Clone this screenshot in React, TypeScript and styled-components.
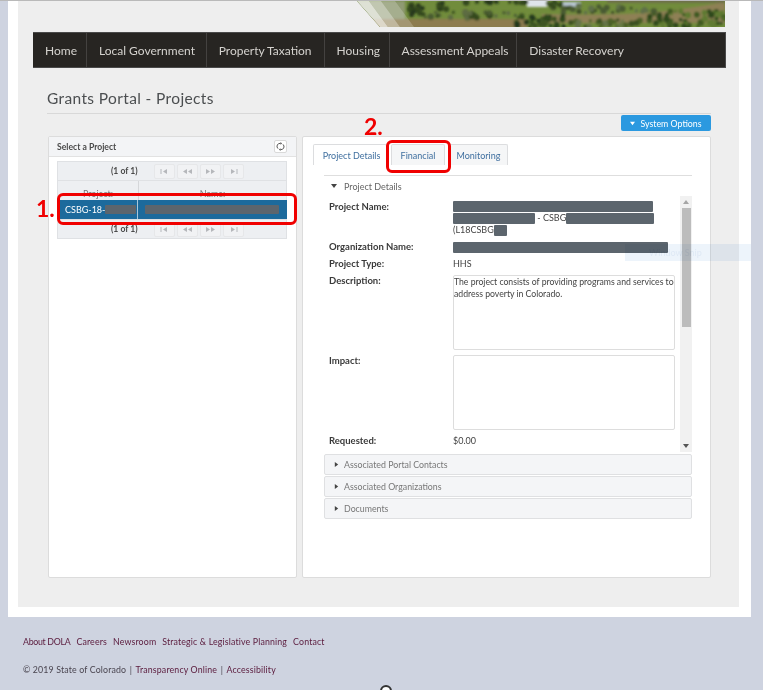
import React from 'react'
import styled, { createGlobalStyle } from 'styled-components'

const GlobalStyle = createGlobalStyle`
html, body { margin: 0; padding: 0; background: #ced3e0; }
* { box-sizing: border-box; }
`;

const panelFont = `Lato, "Open Sans", sans-serif`;

// page shell
const Root = styled.div`
position: relative;
width: 763px;
height: 690px;
overflow: hidden;
background: #ced3e0;
border-top: 1px solid #b9b9b9;
font-family: ${panelFont};
`;
const Sheet = styled.div`
width: 743px;
height: 616px;
margin-left: 8px;
padding: 0 12px 10px 10px;
background: #fff;
`;
const Inner = styled.div`
height: 606px;
background: #eeeeee;
padding: 0 13px 0 15px;
`;

// banner
const Banner = styled.div`
display: flex;
justify-content: flex-end;
height: 26px;
padding-right: 1px;
margin-bottom: 5px;
`;

// nav
const Nav = styled.nav`
display: flex;
height: 36px;
background: #272522;
border: 1px solid #4a4a4a;
border-width: 1px 1px 1px 0;
`;
const NavItem = styled.a<{ $w: number }>`
display: flex;
align-items: center;
width: ${({ $w }) => $w}px;
padding-left: 12px;
border-right: 1px solid #444240;
color: #d5d3cf;
font: 12px ${panelFont};
white-space: nowrap;
&:last-child { border-right: none; }
`;

// title
const TitleBar = styled.div`
margin: 0 0 0 14px;
height: 46px;
width: 664px;
border-bottom: 1px solid #d8d8d8;
display: flex;
align-items: center;
padding-top: 15px;
h1 {
  margin: 0;
  font: 400 15.5px ${panelFont};
  letter-spacing: 0.37px;
  color: #4b4e50;
}
`;
const OptionsRow = styled.div`
display: flex;
justify-content: flex-end;
width: 678px;
height: 22px;
padding-top: 1px;
`;
const OptionsButton = styled.button`
display: flex;
align-items: center;
justify-content: center;
gap: 5px;
width: 90px;
height: 16px;
padding: 0;
border: none;
border-radius: 2px;
background: #2b99e0;
color: #fff;
font: 8.8px ${panelFont};
`;

// panels
const Panels = styled.div`
display: flex;
gap: 5px;
margin-left: 15px;
`;
const Panel = styled.section<{ $w: number }>`
width: ${({ $w }) => $w}px;
height: 442px;
background: #fff;
border: 1px solid #dcdcdc;
border-radius: 2px;
`;

// left panel
const PanelHead = styled.div`
display: flex;
align-items: center;
justify-content: space-between;
height: 20px;
padding: 0 9px 0 8px;
background: #f3f4f6;
border-bottom: 1px solid #e2e2e2;
font: 700 8.6px ${panelFont};
color: #4a4a4a;
`;
const RefreshButton = styled.span`
display: flex;
align-items: center;
justify-content: center;
width: 13px;
height: 13px;
background: #fff;
border: 1px solid #d9d9d9;
border-radius: 2px;
`;
const TableWrap = styled.div`
margin: 4px 9px 0 8px;
`;
const Pager = styled.div`
display: flex;
align-items: center;
height: 20px;
background: #edeff2;
border: 1px solid #dfe1e4;
font: 700 8.6px ${panelFont};
color: #4a4a4a;
`;
const PagerCount = styled.span`
width: 96px;
padding-left: 53px;
white-space: nowrap;
`;
const PagerButton = styled.span`
display: flex;
align-items: center;
justify-content: center;
width: 21px;
height: 15px;
margin-right: 2px;
background: #f1f2f4;
border: 1px solid #e6e7e9;
border-radius: 2px;
`;
const ColumnHead = styled.div`
display: flex;
height: 19px;
background: #edeff2;
border: 1px solid #dfe1e4;
border-width: 0 1px;
font: 9px ${panelFont};
color: #777;
text-align: center;
`;
const Cell = styled.div<{ $first?: boolean }>`
width: ${({ $first }) => ($first ? '81px' : 'auto')};
flex: ${({ $first }) => ($first ? 'none' : 1)};
display: flex;
align-items: center;
justify-content: center;
padding-top: 5px;
border-right: ${({ $first }) => ($first ? '1px solid #d5d7da' : 'none')};
`;
const SelectedRow = styled.div`
display: flex;
height: 19px;
background: #1c6a9c;
color: #fff;
font: 9px ${panelFont};
white-space: nowrap;
`;
const SelectedCell = styled.div<{ $first?: boolean }>`
display: flex;
align-items: center;
width: ${({ $first }) => ($first ? '81px' : 'auto')};
flex: ${({ $first }) => ($first ? 'none' : 1)};
padding-left: ${({ $first }) => ($first ? '8px' : '7px')};
border-right: ${({ $first }) => ($first ? '1px solid #a9c7da' : 'none')};
`;
const Redact = styled.span<{ $w: number; $h?: number }>`
display: inline-block;
flex: none;
vertical-align: middle;
width: ${({ $w }) => $w}px;
height: ${({ $h }) => $h ?? 11}px;
background: #5c656d;
border-radius: 1px;
`;

// right panel
const Tabs = styled.div`
display: flex;
gap: 4px;
margin: 7px 0 0 10px;
height: 21px;
`;
const Tab = styled.div<{ $w: number; $active?: boolean }>`
display: flex;
align-items: center;
justify-content: center;
width: ${({ $w }) => $w}px;
padding-left: ${({ $active }) => ($active ? '3px' : '0')};
background: ${({ $active }) => ($active ? '#fff' : '#f5f6f7')};
border: 1px solid #dcdddf;
border-bottom: none;
border-radius: 2px 2px 0 0;
color: #3f6f9f;
font: 9px ${panelFont};
`;
const DetailBody = styled.div`
margin: 10px 18px 0 21px;
border-top: 1px solid #dedede;
`;
const SectionHead = styled.div`
display: flex;
align-items: center;
gap: 7px;
height: 20px;
padding-left: 7px;
color: #666;
font: 9px ${panelFont};
`;
const ScrollBox = styled.div`
display: flex;
height: 256px;
margin-bottom: 2px;
`;
const Fields = styled.div`
flex: 1;
overflow: hidden;
padding: 4px 5px 0 5px;
`;
const Field = styled.div`
display: grid;
grid-template-columns: 124px 1fr;
margin-bottom: 5px;
font: 9px/12px ${panelFont};
color: #444;
`;
const FieldLabel = styled.div<{ $drop?: number }>`
padding-top: ${({ $drop }) => $drop ?? 0}px;
font: 700 9.5px/12px ${panelFont};
color: #3a3a3a;
`;
const ValueLine = styled.div`
height: 12px;
line-height: 12px;
display: flex;
align-items: center;
white-space: nowrap;
`;
const TextBox = styled.div`
height: 75px;
width: 222px;
padding: 0;
background: #fff;
border: 1px solid #dddddd;
border-radius: 2px;
font: 8.7px/11.5px ${panelFont};
letter-spacing: -0.02px;
white-space: nowrap;
overflow: hidden;
color: #444;
`;
const Scrollbar = styled.div`
display: flex;
flex-direction: column;
align-items: center;
width: 12px;
background: #f1f1f1;
`;
const ScrollArrow = styled.div`
display: flex;
align-items: center;
justify-content: center;
height: 12px;
`;
const ScrollThumb = styled.div`
width: 9px;
height: 119px;
background: #bcbcbc;
`;
const ScrollTrack = styled.div`
flex: 1;
`;
const Accordion = styled.div`
display: flex;
align-items: center;
gap: 5px;
height: 21px;
margin-bottom: 1px;
padding-left: 9px;
background: #f4f5f7;
border: 1px solid #dfe0e2;
border-radius: 2px;
color: #777;
font: 8.8px ${panelFont};
`;

// footer
const Footer = styled.footer`
padding: 17px 0 0 23px;
color: #5a1a3c;
font: 8.8px ${panelFont};
letter-spacing: 0.15px;
`;
const FooterLinks = styled.div`
display: flex;
gap: 6px;
height: 15px;
align-items: center;
span:first-child { letter-spacing: -0.3px; }
`;
const FooterLegal = styled.div`
display: flex;
gap: 3.5px;
height: 15px;
margin-top: 13px;
align-items: center;
color: #4a4550;
a { color: #5a1a3c; }
`;

// overlays
const Callout = styled.div<{ $x: number; $y: number; $w: number; $h: number }>`
position: absolute;
left: ${({ $x }) => $x}px;
top: ${({ $y }) => $y}px;
width: ${({ $w }) => $w}px;
height: ${({ $h }) => $h}px;
border: 3px solid #f00000;
border-radius: 6px;
pointer-events: none;
`;
const Step = styled.div<{ $x: number; $y: number }>`
position: absolute;
left: ${({ $x }) => $x}px;
top: ${({ $y }) => $y}px;
color: #f00000;
font: 700 23px/24px Lato, sans-serif;
`;
const GhostSnip = styled.div`
position: absolute;
left: 625px;
top: 243px;
width: 126px;
height: 17px;
display: flex;
align-items: center;
padding-left: 24px;
background: #edf4fb;
mix-blend-mode: multiply;
color: #dfe9f5;
font: 9px ${panelFont};
`;
const CursorRing = styled.div`
position: absolute;
left: 380px;
top: 684px;
width: 12px;
height: 12px;
border: 2px solid #333;
border-radius: 50%;
background: #fff;
`;

const Caret = ({ dir = 'down', color = '#444', size = 6 }: { dir?: 'down' | 'right' | 'up'; color?: string; size?: number }) => {
  const pts = dir === 'down' ? '0,1 6,1 3,5' : dir === 'up' ? '0,5 6,5 3,1' : '1,0 5,3 1,6';
  return (
    <svg width={size} height={size} viewBox="0 0 6 6"><polygon points={pts} fill={color} /></svg>
  );
};

const PageIcon = ({ kind }: { kind: 'first' | 'prev' | 'next' | 'last' }) => {
  const c = '#b5b7bb';
  return (
    <svg width="11" height="7" viewBox="0 0 11 7" fill={c}>
      {kind === 'first' && <><rect x="1.5" y="1" width="1" height="5" /><polygon points="8,1 8,6 4,3.5" /></>}
      {kind === 'prev' && <><polygon points="5,1 5,6 1,3.5" /><polygon points="10,1 10,6 6,3.5" /></>}
      {kind === 'next' && <><polygon points="1,1 1,6 5,3.5" /><polygon points="6,1 6,6 10,3.5" /></>}
      {kind === 'last' && <><polygon points="3,1 3,6 7,3.5" /><rect x="8.5" y="1" width="1" height="5" /></>}
    </svg>
  );
};

const PagerBar = () => (
  <Pager>
    <PagerCount>(1 of 1)</PagerCount>
    <PagerButton><PageIcon kind="first" /></PagerButton>
    <PagerButton><PageIcon kind="prev" /></PagerButton>
    <PagerButton><PageIcon kind="next" /></PagerButton>
    <PagerButton><PageIcon kind="last" /></PagerButton>
  </Pager>
);

// foliage clusters for the banner photo: x0, x1, y0, y1, count, colours
const FOLIAGE: [number, number, number, number, number, string[]][] = [
  [52, 66, 4, 14, 16, ['#26371a', '#34481f']],
  [80, 90, 2, 9, 8, ['#26371a', '#34481f']],
  [60, 170, 11, 17, 34, ['#4a5c30', '#5d6c42', '#34481f']],
  [100, 172, 0, 2, 14, ['#26371a', '#34481f']],
  [190, 206, 0, 7, 8, ['#34481f', '#4a5c30']],
  [206, 300, 5, 12, 34, ['#4a5a30', '#3c4d27', '#5f6f48']],
  [158, 208, 15, 26, 34, ['#24391a', '#2f4a1c', '#3c5522']],
  [212, 285, 19, 26, 30, ['#4c6028', '#3a4f20', '#65734a']],
  [292, 368, 10, 26, 60, ['#2f4a1c', '#3f5a22', '#5e7a30']],
];

const BannerArt = () => {
  let seed = 7;
  const rand = () => {
    seed = (seed * 9301 + 49297) % 233280;
    return seed / 233280;
  };
  const blobs = FOLIAGE.flatMap(([x0, x1, y0, y1, n, colors]) =>
    Array.from({ length: n }, () => ({
      cx: x0 + rand() * (x1 - x0),
      cy: y0 + rand() * (y1 - y0),
      r: 1.4 + rand() * 2,
      fill: colors[Math.floor(rand() * colors.length)],
    })),
  );
  return (
    <svg width="368" height="26" viewBox="0 0 368 26">
      <defs>
        <filter id="soft"><feGaussianBlur stdDeviation="0.9" /></filter>
        <clipPath id="cut"><polygon points="0,0 368,0 368,26 23,26" /></clipPath>
      </defs>
      <g clipPath="url(#cut)">
        <rect width="368" height="26" fill="#718c3c" />
        <g filter="url(#soft)">
          <rect x="0" y="0" width="48" height="20" fill="#8f9a72" />
          <path d="M0 18 L170 18 L170 27 L0 27 Z" fill="#8d7b50" />
          <path d="M185 13 Q240 15 290 12 Q330 8 368 1 L368 22 L185 22 Z" fill="#8e8055" />
          <rect x="170" y="-2" width="20" height="8" fill="#dfe4ea" />
          <rect x="206" y="1" width="18" height="5" fill="#b9c7d4" />
          <rect x="250" y="-2" width="118" height="4" fill="#6d7147" />
          {blobs.map((b, i) => <circle key={i} cx={b.cx} cy={b.cy} r={b.r} fill={b.fill} />)}
        </g>
        <polygon points="0,0 12,0 31,26 23,26" fill="#fff" opacity="0.7" />
        <polygon points="12,0 24,0 43,26 31,26" fill="#fff" opacity="0.45" />
        <polygon points="24,0 38,0 57,26 43,26" fill="#fff" opacity="0.2" />
      </g>
    </svg>
  );
};

const NAV_ITEMS = [
  { label: 'Home', w: 54 },
  { label: 'Local Government', w: 120 },
  { label: 'Property Taxation', w: 118 },
  { label: 'Housing', w: 65 },
  { label: 'Assessment Appeals', w: 128 },
  { label: 'Disaster Recovery', w: 208 },
];

const App = () => {
  return (
    <Root>
      <GlobalStyle />
      <Sheet>
        <Inner>
          <Banner><BannerArt /></Banner>
          <Nav>
            {NAV_ITEMS.map(item => <NavItem key={item.label} $w={item.w}>{item.label}</NavItem>)}
          </Nav>
          <TitleBar><h1>Grants Portal - Projects</h1></TitleBar>
          <OptionsRow>
            <OptionsButton><Caret color="#fff" size={5} />System Options</OptionsButton>
          </OptionsRow>
          <Panels>
            <Panel $w={249}>
              <PanelHead>
                Select a Project
                <RefreshButton>
                  <svg width="9" height="9" viewBox="0 0 9 9" fill="none" stroke="#444" strokeWidth="0.9">
                    <path d="M2 6.6A3 3 0 0 1 4.5 1.4" />
                    <path d="M7 2.4A3 3 0 0 1 4.5 7.6" />
                    <polygon points="4.5,0 6,1.4 4.5,2.8" fill="#444" stroke="none" />
                    <polygon points="4.5,6.2 3,7.6 4.5,9" fill="#444" stroke="none" />
                  </svg>
                </RefreshButton>
              </PanelHead>
              <TableWrap>
                <PagerBar />
                <ColumnHead>
                  <Cell $first>Project:</Cell>
                  <Cell>Name:</Cell>
                </ColumnHead>
                <SelectedRow>
                  <SelectedCell $first>CSBG-18-<Redact $w={31} $h={9} /></SelectedCell>
                  <SelectedCell><Redact $w={134} $h={9} /></SelectedCell>
                </SelectedRow>
                <PagerBar />
              </TableWrap>
            </Panel>
            <Panel $w={409}>
              <Tabs>
                <Tab $w={74} $active>Project Details</Tab>
                <Tab $w={54}>Financial</Tab>
                <Tab $w={59}>Monitoring</Tab>
              </Tabs>
              <DetailBody>
                <SectionHead><Caret />Project Details</SectionHead>
                <ScrollBox>
                  <Fields>
                    <Field>
                      <FieldLabel $drop={1}>Project Name:</FieldLabel>
                      <div>
                        <ValueLine><Redact $w={200} /></ValueLine>
                        <ValueLine><Redact $w={82} />&nbsp;- CSBG<Redact $w={88} /></ValueLine>
                        <ValueLine>(L18CSBG<Redact $w={13} /></ValueLine>
                      </div>
                    </Field>
                    <Field>
                      <FieldLabel>Organization Name:</FieldLabel>
                      <ValueLine><Redact $w={215} /></ValueLine>
                    </Field>
                    <Field>
                      <FieldLabel>Project Type:</FieldLabel>
                      <div>HHS</div>
                    </Field>
                    <Field>
                      <FieldLabel>Description:</FieldLabel>
                      <TextBox>The project consists of providing programs and services to<br />address poverty in Colorado.</TextBox>
                    </Field>
                    <Field>
                      <FieldLabel>Impact:</FieldLabel>
                      <TextBox />
                    </Field>
                    <Field>
                      <FieldLabel>Requested:</FieldLabel>
                      <div>$0.00</div>
                    </Field>
                  </Fields>
                  <Scrollbar>
                    <ScrollArrow><Caret dir="up" color="#a5a5a5" size={6} /></ScrollArrow>
                    <ScrollThumb />
                    <ScrollTrack />
                    <ScrollArrow><Caret color="#555" size={6} /></ScrollArrow>
                  </Scrollbar>
                </ScrollBox>
                <Accordion><Caret dir="right" size={5} />Associated Portal Contacts</Accordion>
                <Accordion><Caret dir="right" size={5} />Associated Organizations</Accordion>
                <Accordion><Caret dir="right" size={5} />Documents</Accordion>
              </DetailBody>
            </Panel>
          </Panels>
        </Inner>
      </Sheet>
      <Footer>
        <FooterLinks>
          <span>About DOLA</span>
          <span>Careers</span>
          <span>Newsroom</span>
          <span>Strategic &amp; Legislative Planning</span>
          <span>Contact</span>
        </FooterLinks>
        <FooterLegal>
          <span>© 2019 State of Colorado</span>
          <span>|</span>
          <a>Transparency Online</a>
          <span>|</span>
          <a>Accessibility</a>
        </FooterLegal>
      </Footer>
      <GhostSnip>Window Snip</GhostSnip>
      <Callout $x={57} $y={192} $w={240} $h={32} />
      <Callout $x={386} $y={139} $w={65} $h={33} />
      <Step $x={36} $y={195}>1.</Step>
      <Step $x={364} $y={113}>2.</Step>
      <CursorRing />
    </Root>
  )
}

export default App
